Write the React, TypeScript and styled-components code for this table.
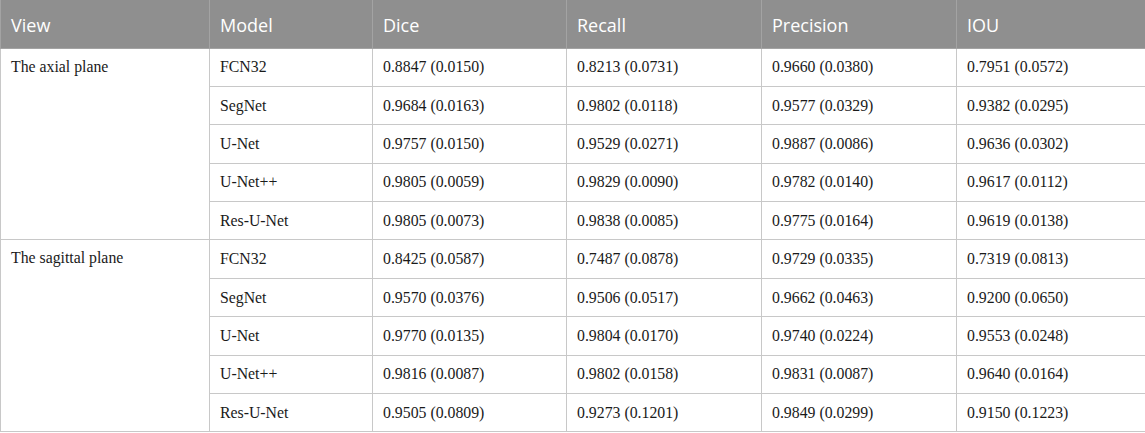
import styled, { createGlobalStyle } from "styled-components"

const Global = createGlobalStyle`
    html, body {
        margin:0;
        padding:0;
        background:#fff;
    }
`

const Table = styled.table`
    width:1145px;
    border-collapse:collapse;
    table-layout:fixed;
`

const Col = styled.col<{ $w: number }>`
    width:${(p) => p.$w}px;
`

const HeadRow = styled.tr`
    height:48px;
    background:#8f8f8f;
`

const Th = styled.th`
    box-sizing:border-box;
    border:1px solid #a3a3a3;
    border-top:none;
    padding:2px 10px 0;
    text-align:left;
    font-family:"Open Sans", "Liberation Sans", sans-serif;
    font-size:18px;
    font-weight:400;
    color:#fff;
`

const Row = styled.tr`
    height:38.4px;
`

const Td = styled.td<{ $top?: boolean }>`
    box-sizing:border-box;
    border:1px solid #c8c8c8;
    padding:${(p) => (p.$top ? "9px 10px 0" : "0 10px")};
    vertical-align:${(p) => (p.$top ? "top" : "middle")};
    font-family:"Liberation Serif", serif;
    font-size:15.8px;
    color:#1a1a1a;
    white-space:nowrap;
`

const columns = [
  { name: "View", w: 209 },
  { name: "Model", w: 163 },
  { name: "Dice", w: 194 },
  { name: "Recall", w: 195 },
  { name: "Precision", w: 195 },
  { name: "IOU", w: 189 },
]

const groups = [
  {
    view: "The axial plane",
    rows: [
      ["FCN32", "0.8847 (0.0150)", "0.8213 (0.0731)", "0.9660 (0.0380)", "0.7951 (0.0572)"],
      ["SegNet", "0.9684 (0.0163)", "0.9802 (0.0118)", "0.9577 (0.0329)", "0.9382 (0.0295)"],
      ["U-Net", "0.9757 (0.0150)", "0.9529 (0.0271)", "0.9887 (0.0086)", "0.9636 (0.0302)"],
      ["U-Net++", "0.9805 (0.0059)", "0.9829 (0.0090)", "0.9782 (0.0140)", "0.9617 (0.0112)"],
      ["Res-U-Net", "0.9805 (0.0073)", "0.9838 (0.0085)", "0.9775 (0.0164)", "0.9619 (0.0138)"],
    ],
  },
  {
    view: "The sagittal plane",
    rows: [
      ["FCN32", "0.8425 (0.0587)", "0.7487 (0.0878)", "0.9729 (0.0335)", "0.7319 (0.0813)"],
      ["SegNet", "0.9570 (0.0376)", "0.9506 (0.0517)", "0.9662 (0.0463)", "0.9200 (0.0650)"],
      ["U-Net", "0.9770 (0.0135)", "0.9804 (0.0170)", "0.9740 (0.0224)", "0.9553 (0.0248)"],
      ["U-Net++", "0.9816 (0.0087)", "0.9802 (0.0158)", "0.9831 (0.0087)", "0.9640 (0.0164)"],
      ["Res-U-Net", "0.9505 (0.0809)", "0.9273 (0.1201)", "0.9849 (0.0299)", "0.9150 (0.1223)"],
    ],
  },
]

const App = () => {
  return (
    <>
      <Global />
      <Table>
        <colgroup>
          {columns.map((c) => (
            <Col key={c.name} $w={c.w} />
          ))}
        </colgroup>
        <thead>
          <HeadRow>
            {columns.map((c) => (
              <Th key={c.name}>{c.name}</Th>
            ))}
          </HeadRow>
        </thead>
        <tbody>
          {groups.map((g) =>
            g.rows.map((r, i) => (
              <Row key={g.view + i}>
                {i === 0 && (
                  <Td $top rowSpan={g.rows.length}>{g.view}</Td>
                )}
                {r.map((v, j) => (
                  <Td key={j}>{v}</Td>
                ))}
              </Row>
            ))
          )}
        </tbody>
      </Table>
    </>
  )
}

export default App
